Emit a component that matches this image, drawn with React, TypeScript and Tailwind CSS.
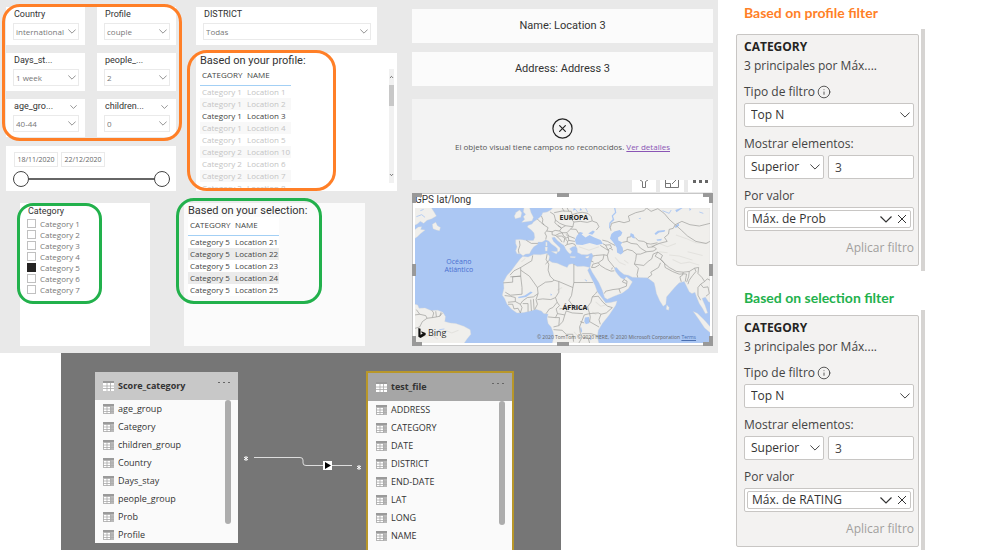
import { useState } from "react"
import type { ReactNode } from "react"
import clsx from "clsx"
import { ChevronDown, ChevronUp, CircleX, Info } from "lucide-react"

const slicers = [
    { title: "Country", value: "international", menu: false },
    { title: "Profile", value: "couple", menu: false },
    { title: "Days_st...", value: "1 week", menu: false },
    { title: "people_...", value: "2", menu: false },
    { title: "age_gro...", value: "40-44", menu: true },
    { title: "children...", value: "0", menu: true },
]

const profileRows = [
    ["Category 1", "Location 1"],
    ["Category 1", "Location 2"],
    ["Category 1", "Location 3"],
    ["Category 1", "Location 4"],
    ["Category 1", "Location 5"],
    ["Category 2", "Location 10"],
    ["Category 2", "Location 6"],
    ["Category 2", "Location 7"],
    ["Category 2", "Location 8"],
]

const selectionRows = [
    ["Category 5", "Location 21"],
    ["Category 5", "Location 22"],
    ["Category 5", "Location 23"],
    ["Category 5", "Location 24"],
    ["Category 5", "Location 25"],
]

const categories = ["Category 1", "Category 2", "Category 3", "Category 4", "Category 5", "Category 6", "Category 7"]

const scoreFields = ["age_group", "Category", "children_group", "Country", "Days_stay", "people_group", "Prob", "Profile"]
const fileFields = ["ADDRESS", "CATEGORY", "DATE", "DISTRICT", "END-DATE", "LAT", "LONG", "NAME"]

function Caret({ className }: { className: string }) {
    return (
        <svg viewBox="0 0 12 7" className={className} fill="none" stroke="currentColor" strokeWidth="1.2" aria-hidden>
            <path d="M.5 .5 L6 6 L11.500 .5" />
        </svg>
    )
}

function Slicer({ title, value, menu = false }: { title: string; value: string; menu?: boolean }) {
    return (
        <label className="block bg-white pl-[7px] pr-1.5 pb-[5px]">
            <span className="flex h-4 items-center justify-between pl-px pr-0.5 font-[Roboto] text-[9px] text-[#333]">
                {title}
                {menu ? <Caret className="h-1 w-[7px] text-[#666]" /> : null}
            </span>
            <span className="relative block">
                <select className="block h-[17px] w-full appearance-none border border-[#eaeaea] bg-white pl-0.5 text-[8px] text-[#777]">
                    <option>{value}</option>
                </select>
                <Caret className="pointer-events-none absolute right-[3px] top-1.5 h-[5px] w-2 text-[#777]" />
            </span>
        </label>
    )
}

function DataTable({ rows, faded, stripe }: { rows: string[][]; faded?: boolean; stripe: string }) {
    return (
        <table className="w-[91px] table-fixed border-collapse text-[8px] leading-3">
            <thead>
                <tr className="h-[18px] bg-white text-left align-top text-[#444]">
                    <th className="w-11 border-b border-[#a3d0f5] pl-0.5 pt-0.5 font-normal">CATEGORY</th>
                    <th className="border-b border-[#a3d0f5] pl-[3px] pt-0.5 font-normal">NAME</th>
                </tr>
            </thead>
            <tbody>
                {rows.map(([category, name], i) => (
                    <tr
                        key={name}
                        className={clsx(
                            "h-3 whitespace-nowrap",
                            i % 2 === 1 ? stripe : "bg-white",
                            faded && name !== "Location 3" ? "text-[#c4c4c4]" : "text-[#444]"
                        )}
                    >
                        <td className="pl-0.5">{category}</td>
                        <td className="pl-[3px]">{name}</td>
                    </tr>
                ))}
            </tbody>
        </table>
    )
}

function DateRange() {
    const [range, setRange] = useState([0, 34])
    const thumb =
        "pointer-events-none absolute inset-0 h-4 w-full appearance-none bg-transparent [&::-webkit-slider-thumb]:pointer-events-auto [&::-webkit-slider-thumb]:h-4 [&::-webkit-slider-thumb]:w-4 [&::-webkit-slider-thumb]:appearance-none [&::-webkit-slider-thumb]:rounded-full [&::-webkit-slider-thumb]:border [&::-webkit-slider-thumb]:border-[#444] [&::-webkit-slider-thumb]:bg-white"

    return (
        <div className="h-[45px] bg-white pl-[7px] pr-1.5 pt-1.5">
            <div className="flex gap-[3px] pl-px text-[7px] text-[#666]">
                <input aria-label="Start date" defaultValue="18/11/2020" className="h-[15px] w-11 border border-[#eaeaea] text-center" />
                <input aria-label="End date" defaultValue="22/12/2020" className="h-[15px] w-11 border border-[#eaeaea] text-center" />
            </div>
            <div className="relative mt-1 flex h-4 items-center">
                <div className="h-0.5 w-full bg-[#666]" />
                <input
                    type="range"
                    aria-label="Range start"
                    min={0}
                    max={34}
                    value={range[0]}
                    onChange={(e) => setRange([Number(e.target.value), range[1]])}
                    className={thumb}
                />
                <input
                    type="range"
                    aria-label="Range end"
                    min={0}
                    max={34}
                    value={range[1]}
                    onChange={(e) => setRange([range[0], Number(e.target.value)])}
                    className={thumb}
                />
            </div>
        </div>
    )
}

function WorldMap() {
    return (
        <svg viewBox="30 84 882 404" preserveAspectRatio="none" className="block h-[135px] w-full bg-[#abc7f3]" aria-hidden>
            <g fill="#f0efec" stroke="#d9d9d6" strokeWidth="1">
                {/* Eurasia */}
                <path d="M442 84 L436 90 L425 96 L412 98 L408 108 L396 118 L384 126 L380 132 L368 136 L366 141 L378 150 L386 159 L388 172 L384 181 L364 181 L345 178 L331 179 L331 190 L335 200 L331 212 L335 221 L345 221 L353 227 L361 222 L372 221 L378 210 L385 200 L396 193 L398 186 L410 186 L421 179 L430 183 L438 192 L449 199 L456 206 L456 217 L463 212 L464 204 L454 194 L444 184 L439 173 L447 171 L456 181 L468 191 L476 196 L480 206 L487 216 L494 222 L499 215 L492 206 L501 200 L511 198 L515 205 L516 217 L528 223 L545 224 L558 219 L563 227 L558 242 L553 262 L560 276 L570 292 L580 308 L590 330 L597 352 L605 357 L625 348 L650 338 L668 325 L680 305 L672 298 L662 290 L655 298 L645 293 L638 285 L630 275 L625 262 L633 262 L641 272 L655 283 L668 285 L680 291 L700 292 L725 293 L735 300 L745 308 L748 320 L752 340 L762 362 L772 378 L780 372 L782 350 L795 335 L808 320 L820 308 L835 304 L842 318 L850 335 L858 340 L867 336 L872 350 L880 370 L890 385 L898 400 L905 398 L897 375 L888 355 L898 350 L908 365 L912 366 L912 84 Z" />
                {/* Africa */}
                <path d="M352 229 L345 236 L330 255 L318 272 L305 286 L295 305 L296 325 L291 345 L298 355 L305 371 L318 386 L335 398 L355 397 L375 392 L392 387 L408 392 L415 400 L428 401 L425 415 L428 430 L437 440 L443 455 L445 470 L440 490 L580 490 L575 470 L578 450 L590 430 L610 405 L630 375 L634 362 L615 367 L600 368 L590 355 L575 335 L568 315 L555 290 L546 270 L552 262 L535 258 L515 259 L500 251 L490 253 L485 262 L470 256 L455 249 L440 247 L430 240 L432 228 L425 220 L405 224 L385 223 L368 231 Z" />
                {/* British Isles */}
                <path d="M356 82 L372 82 L377 98 L384 112 L380 122 L362 125 L349 127 L358 118 L354 110 L361 103 L354 96 Z" />
                <path d="M333 97 L343 90 L349 98 L346 112 L330 116 L327 108 Z" />
                {/* North America */}
                <path d="M28 82 L78 82 L87 96 L94 108 L80 116 L66 121 L56 130 L46 124 L37 132 L28 136 Z" />
                <path d="M82 133 L92 127 L97 137 L106 142 L103 152 L94 150 L84 146 Z" />
                <path d="M28 150 L40 141 L50 140 L47 148 L60 150 L47 160 L37 170 L28 176 Z" />
                {/* South America */}
                <path d="M28 372 L38 374 L42 384 L60 383 L78 391 L98 390 L113 396 L121 409 L119 424 L135 428 L152 430 L176 438 L195 448 L197 462 L186 475 L176 490 L28 490 Z" />
                <path d="M783 374 L790 382 L788 390 L781 387 Z" />
                <path d="M862 394 L874 399 L895 419 L914 441 L914 458 L896 443 L877 415 Z" />
                <path d="M438 214 L456 214 L453 222 Z" />
                <path d="M421 186 L425 186 L425 198 L421 198 Z" />
                <path d="M419 201 L426 201 L425 213 L420 213 Z" />
                <path d="M494 229 L510 230 L508 233 L495 232 Z" />
                <path d="M540 230 L551 227 L548 234 L541 234 Z" />
            </g>
            {/* relief */}
            <g fill="none" stroke="#e3e2de" strokeWidth="3">
                <path d="M735 197 L760 190 L785 200 L810 190 M800 238 L825 250 L850 246 L880 255 M790 225 L820 228 L860 240 M810 165 L840 175 L870 188 L905 190 M655 240 L668 250 M628 232 L642 247 L660 255 M760 215 L785 218 M845 215 L890 226 M570 365 L585 378 L600 374 M520 200 L550 210 L580 200 M348 245 L360 235" />
                <path d="M50 470 L80 464 L98 476 M120 450 L140 458 L160 450 M455 330 L470 322 M560 395 L572 404 M505 455 L520 470" />
            </g>
            {/* inland seas and lakes */}
            <g fill="#abc7f3">
                <path d="M512 193 L508 180 L514 167 L524 156 L533 159 L528 163 L540 172 L552 165 L566 172 L585 180 L592 191 L574 195 L552 189 L530 195 Z" />
                <path d="M548 160 L562 151 L568 155 L560 164 Z" />
                <path d="M626 154 L642 150 L650 157 L646 166 L637 172 L638 181 L650 187 L645 194 L651 203 L653 217 L645 223 L634 217 L633 203 L622 186 L613 175 L617 162 Z" />
                <path d="M675 159 L684 163 L688 175 L681 174 L673 167 Z" />
                <path d="M746 160 L756 152 L778 150 L776 155 L760 157 L750 165 Z" />
                <path d="M752 178 L768 176 L766 181 L754 182 Z M806 140 L818 130 L820 136 L810 144 Z M808 90 L825 84 L830 84 L812 97 Z M538 412 L550 410 L552 428 L541 432 L536 424 Z M435 340 L440 343 L436 347 Z M526 438 L530 452 L527 458 L524 446 Z M553 462 L558 478 L554 480 Z M505 84 L512 88 L502 92 Z M524 84 L530 90 L522 92 Z" />
                <path d="M629 84 L632 98 L622 108 L626 120 L615 130 L612 145 L610 145 L611 128 L621 118 L618 107 L628 97 L625 84 Z" />
                <path d="M338 350 L358 346 L376 334 L382 337 L362 350 L340 354 Z M536 296 L545 302 L542 304 Z M850 84 L856 88 L851 93 Z M698 115 L705 113 L704 118 Z" />
            </g>
            {/* country borders */}
            <g fill="none" stroke="#9b9b98" strokeWidth="2" strokeLinejoin="round">
                <path d="M363 181 L378 190 L397 190 M342 182 L344 195 L339 210 L341 220 M396 117 L405 126 L416 135 L428 143 L424 153 L418 158 L423 168 L421 178 M408 108 L412 118 L411 128 M416 135 L411 128 M424 153 L440 155 L449 151 L462 153 L468 144 L457 136 L448 128 L450 120 L446 104 L434 96 M450 120 L463 130 L480 137 L502 140 M446 98 L470 93 L497 94 L500 104 L497 117 L505 126 L502 140" />
                <path d="M470 84 L476 94 M485 84 L490 94 M500 104 L516 99 L530 97 L547 100 L557 110 L560 123 L574 128 L580 140 L572 150 M505 126 L524 124 L545 127 L559 123 M457 136 L468 144 L480 137 M462 153 L470 158 L484 158 L495 147 L502 140 M440 155 L440 164 L450 166 L462 160 L470 158 M450 166 L462 176 L470 186 M455 168 L468 168 L478 174 L475 187 M470 158 L474 168 L484 174 L488 170 L482 163 M484 158 L490 168 L508 175 M495 147 L512 148 L519 160 L522 158 M488 170 L490 181 L508 184 M478 174 L486 184 L485 193 L479 197 M485 193 L500 190 L508 193 L510 198 M486 184 L490 181" />
                <path d="M590 180 L606 184 L616 190 L628 196 M592 191 L600 195 L607 210 L613 204 L622 210 M600 195 L614 194 L618 204 M584 196 L600 206 L610 212 L605 226 L595 224 L570 226 L562 228 M595 224 L592 238 L578 248 L562 252 M578 248 L584 256 L600 266 L616 273 L626 272 M605 226 L608 240 L618 252 L626 262 M562 252 L558 262 L568 262 L580 255 M556 242 L564 246 M620 262 L618 268 M655 298 L664 303 L662 318 L640 326 L622 328 L600 333 L596 340 M640 326 L644 338 M655 298 L650 305 L662 310" />
                <path d="M652 214 L665 208 L680 212 L692 222 L690 238 L686 252 L698 264 L694 283 L696 292 M692 222 L704 222 L722 215 L742 213 M686 252 L714 256 L727 244 L738 236 L742 222 L756 216 M742 213 L752 207 L745 200 L726 202 L722 190 L735 192 L755 188 M650 187 L664 184 L676 190 L694 192 L704 204 L722 215 M664 184 L665 172 L676 170 M688 172 L698 182 L714 184 L724 190 M616 152 L614 142 L618 130 L640 124 L655 128 L672 123 L668 108 L690 98 L715 92 L722 84" />
                <path d="M722 84 L736 94 L756 86 L775 100 L790 118 L808 134 M808 134 L802 145 L790 148 L788 162 L776 172 L784 184 L760 190 L738 200 M808 134 L826 150 L845 168 L870 184 L900 190 L912 184 M808 134 L828 124 L852 134 L880 138 L912 130 M756 216 L770 226 L764 238 L776 250 L790 262 L812 274 L832 276 L850 274 L866 264 L878 262 M756 216 L748 228 L768 240 L776 250 M726 293 L738 284 L735 276 L758 262 L764 248 M776 250 L778 262 L800 274 L820 282 L834 281 M832 276 L830 285 L822 290 L826 305 M834 281 L842 282 L840 292 L838 304 M850 274 L848 290 L842 306 M866 264 L870 274 L860 286 L850 300 L846 312 M878 262 L876 280 L888 292 L896 304 L884 312 L876 322 L876 345 L884 360 M896 304 L904 296 L912 300 M884 312 L892 322 L906 320 L910 340 L900 348" />
                <path d="M382 226 L379 242 L362 252 L346 262 L326 272 L314 285 M346 262 L346 288 L315 290 M346 270 L372 288 L396 322 L420 306 L440 304 L446 300 M346 288 L350 322 L350 342 L315 345 L300 336 M346 288 L322 290 L322 306 L294 308 M425 222 L422 238 L430 252 L428 270 L434 288 L446 300 L460 304 L502 322 M505 252 L505 307 L502 322 M505 307 L562 307 M432 240 L420 252 M396 322 L398 340 L384 350 L366 352 L352 362 L345 372 M398 340 L392 358 L396 372 L388 388 M396 358 L412 356 L436 358 L450 352 L460 336 L460 304 M450 352 L455 366 L442 382 L432 386 L422 400 M455 366 L462 376 L452 386 L456 400 L450 412 L428 410" />
                <path d="M502 322 L498 346 L490 360 L500 374 L476 384 L462 386 M500 374 L514 384 L532 384 L546 380 L552 400 M546 380 L556 366 L560 350 L570 340 L574 334 M560 350 L578 348 L592 366 L606 378 L620 382 L602 398 L586 402 L578 398 L552 400 M586 402 L580 418 L584 432 M552 400 L554 410 L552 424 L580 440 M552 400 L536 404 L530 420 L522 440 L524 456 L530 470 L520 488 M456 400 L478 404 L482 392 L500 398 L532 400 M478 404 L472 424 L460 436 L444 440 M450 412 L462 412 L460 436 M444 448 L470 450 L482 462 L502 462 L504 484 M530 470 L548 474 L552 488 M524 424 L536 428 M530 460 L556 460 L576 466" />
                <path d="M298 346 L315 348 L330 352 L330 364 L308 366 M308 372 L322 372 L326 386 M326 386 L338 384 L345 398 M345 372 L350 382 L345 398 M352 370 L368 370 L368 394 M376 358 L378 392 M384 356 L386 388 M330 364 L345 372" />
                <path d="M34 388 L44 402 L62 406 L66 414 L52 424 L44 440 L30 444 M66 414 L82 412 L86 398 L80 390 M82 412 L94 410 L104 408 L112 398 M94 410 L92 393 M104 408 L108 396 M30 404 L44 402" />
            </g>
            <g fill="none" stroke="#abc7f3" strokeWidth="2.5">
                <path d="M34 110 L50 104 L60 112 M46 92 L56 88 M50 144 L68 140 M88 460 L104 448 L118 446 M510 88 L516 96 M770 92 L790 100 L796 90 M880 96 L892 100 M540 84 L546 96" />
            </g>
        </svg>
    )
}

function Handles() {
    return (
        <div className="pointer-events-none absolute -inset-px" aria-hidden>
            <span className="absolute left-0 top-0 h-2.5 w-2.5 border-l-4 border-t-4 border-[#999]" />
            <span className="absolute right-0 top-0 h-2.5 w-2.5 border-r-4 border-t-4 border-[#999]" />
            <span className="absolute bottom-0 left-0 h-2.5 w-2.5 border-b-4 border-l-4 border-[#999]" />
            <span className="absolute bottom-0 right-0 h-2.5 w-2.5 border-b-4 border-r-4 border-[#999]" />
            <span className="absolute inset-x-0 top-0 mx-auto h-1 w-3 bg-[#999]" />
            <span className="absolute inset-x-0 bottom-0 mx-auto h-1 w-3 bg-[#999]" />
            <span className="absolute inset-y-0 left-0 my-auto h-3 w-1 bg-[#999]" />
            <span className="absolute inset-y-0 right-0 my-auto h-3 w-1 bg-[#999]" />
        </div>
    )
}

function MapVisual() {
    return (
        <section className="relative mt-px border border-[#c8c8c8] bg-white px-0.5 pb-0.5">
            <h2 className="h-3.5 font-[Roboto] text-[10px] leading-3 text-[#333]">GPS lat/long</h2>
            <div className="relative">
                <WorldMap />
                <span className="absolute left-[49%] top-1 text-[7px] font-bold leading-3 text-[#222]">EUROPA</span>
                <span className="absolute left-1/2 top-[94px] text-[7px] font-bold leading-3 text-[#222]">ÁFRICA</span>
                <span className="absolute left-[10%] top-[50px] text-center text-[7px] leading-2 text-[#4a6fd0]">
                    Océano
                    <br />
                    Atlántico
                </span>
                <span className="absolute bottom-1 left-[3px] flex items-center gap-0.5 text-[9px] leading-3 text-[#333]">
                    <svg viewBox="0 0 8 11" className="h-2.5 w-2" fill="#111" aria-hidden>
                        <path d="M0 0 L2.4 .8 V7.4 L5 6 L3.8 5.4 L3 3.6 L8 5.4 V7.8 L2.4 11 L0 9.6 Z" />
                    </svg>
                    Bing
                </span>
                <span className="absolute bottom-0.5 right-3.5 text-[5px] leading-2 text-[#666]">
                    © 2020 TomTom © 2020 HERE, © 2020 Microsoft Corporation{" "}
                    <a href="#terms" className="text-[#4a6fb0] underline">
                        Terms
                    </a>
                </span>
            </div>
            <Handles />
        </section>
    )
}

function Report() {
    return (
        <div className="grid grid-cols-[391fr_301fr] gap-[15px] bg-[#e9e9e9] pb-[7px] pl-1.5 pr-[5px]">
            <div className="pt-[7px]">
                <div className="flex gap-5">
                    <div className="w-[170px]">
                        <div className="relative mb-[9px] grid grid-cols-2 gap-x-3 gap-y-2">
                            {slicers.map((s) => (
                                <Slicer key={s.title} {...s} />
                            ))}
                            <div className="pointer-events-none absolute -bottom-1 -left-1 -right-1.5 -top-[3px] rounded-[18px] border-3 border-[#ff7f27]" />
                        </div>
                        <DateRange />
                    </div>

                    <div className="flex flex-1 flex-col gap-2">
                        <div className="mr-5">
                            <Slicer title="DISTRICT" value="Todas" />
                        </div>
                        <section className="relative h-[138px] bg-white pl-1 pr-[3px]">
                            <h2 className="h-3.5 font-[Roboto] text-[11px] leading-4 text-[#333]">Based on your profile:</h2>
                            <div className="flex h-[121px] justify-between overflow-hidden">
                                <DataTable rows={profileRows} faded stripe="bg-[#f8f8f8]" />
                                <div className="mt-0.5 flex h-[114px] w-[5px] flex-col items-center bg-[#f1f1f1]">
                                    <ChevronUp className="mt-1 h-2 w-[5px] text-[#555]" strokeWidth={4} />
                                    <span className="mt-1 h-[21px] w-full bg-[#c8c8c8]" />
                                    <ChevronDown className="mb-1 mt-auto h-2 w-[5px] text-[#555]" strokeWidth={4} />
                                </div>
                            </div>
                            <div className="pointer-events-none absolute -left-[9px] -top-[3px] bottom-0 w-[149px] rounded-[20px] border-3 border-[#ff7f27]" />
                        </section>
                    </div>
                </div>

                <div className="mt-3 flex gap-[34px] pl-3.5">
                    <fieldset className="relative h-[143px] w-[130px] bg-white px-[7px]">
                        <div className="h-[15px] pl-px font-[Roboto] text-[9px] leading-4 text-[#333]">Category</div>
                        {categories.map((c) => (
                            <label key={c} className="flex h-[11px] items-center gap-1 text-[8px] leading-[11px] text-[#777]">
                                <input
                                    type="checkbox"
                                    defaultChecked={c === "Category 5"}
                                    className="h-[9px] w-[9px] appearance-none border border-[#c0c0c0] bg-white checked:border-[#252423] checked:bg-[#252423]"
                                />
                                {c}
                            </label>
                        ))}
                        <div className="pointer-events-none absolute -left-[3px] top-0 h-[101px] w-[85px] rounded-[16px] border-3 border-[#22b14c]" />
                    </fieldset>

                    <section className="relative mr-8 h-[143px] flex-1 bg-[#fbfbfb] pl-1">
                        <h2 className="h-3.5 font-[Roboto] text-[11px] leading-4 text-[#333]">Based on your selection:</h2>
                        <DataTable rows={selectionRows} stripe="bg-[#ebebeb]" />
                        <div className="pointer-events-none absolute -left-2 -top-[5px] h-[106px] w-[146px] rounded-[18px] border-3 border-[#22b14c]" />
                    </section>
                </div>
            </div>

            <div className="pt-[9px] text-[#333]">
                <div className="flex h-[34px] items-center justify-center bg-[#fbfbfb] font-[Roboto] text-[11px]">Name: Location 3</div>
                <div className="mt-[9px] flex h-[34px] items-center justify-center bg-[#fbfbfb] font-[Roboto] text-[11px]">
                    Address: Address 3
                </div>
                <div className="mt-[13px] flex h-[81px] flex-col items-center bg-[#f3f3f3] pt-[18px]">
                    <CircleX className="h-[23px] w-[23px] text-[#222]" strokeWidth={1.25} />
                    <p className="text-[8px] leading-3.5 text-[#555]">
                        El objeto visual tiene campos no reconocidos.{" "}
                        <a href="#details" className="text-[#8a55b5] underline">
                            Ver detalles
                        </a>
                    </p>
                </div>
                <div className="flex justify-end gap-1 pr-px">
                    <button type="button" aria-label="Filters" className="flex h-3 w-6 justify-center overflow-hidden bg-white">
                        <svg viewBox="0 0 12 12" className="h-3 w-3" fill="none" stroke="#777">
                            <path d="M2 0 L4.500 1.500 V7.500 H7.500 V1.500 L10 0" />
                        </svg>
                    </button>
                    <button type="button" aria-label="Focus mode" className="flex h-3 w-6 justify-center overflow-hidden bg-white">
                        <svg viewBox="0 0 16 12" className="h-3 w-4" fill="none" stroke="#777">
                            <path d="M1.500 0 V7.500 H14.500 V0 M1.500 3.500 H6.500 V7.500 M8 4 L12 0" />
                        </svg>
                    </button>
                    <button type="button" aria-label="More options" className="flex h-3 w-6 justify-center gap-[3px] bg-white">
                        <span className="h-[3px] w-[3px] bg-[#666]" />
                        <span className="h-[3px] w-[3px] bg-[#666]" />
                        <span className="h-[3px] w-[3px] bg-[#666]" />
                    </button>
                </div>
                <MapVisual />
            </div>
        </div>
    )
}

function FieldIcon({ header = false }: { header?: boolean }) {
    return (
        <svg viewBox="0 0 11 10" className="h-2.5 w-[11px] shrink-0" aria-hidden>
            <path d="M0 0 H11 V10 H0 Z" fill={header ? "#fff" : "#b8b8b8"} />
            {header ? null : <path d="M1 3 H7 V9 H1 Z" fill="#fff" />}
            <path d="M0 0 H11 V2 H0 Z" fill="#9a9a9a" />
            <path d="M0 5 H11 M0 7.500 H11 M4 2 V10 M7.500 2 V10" stroke="#aaa" strokeWidth=".8" />
        </svg>
    )
}

function ModelTable({ name, fields, selected = false }: { name: string; fields: string[]; selected?: boolean }) {
    return (
        <div className="flex h-full flex-col bg-[#fafafa] text-[9px] text-[#333]">
            <div className={clsx("flex h-7 shrink-0 items-center gap-1 px-2", selected ? "bg-[#a6a6a6]" : "bg-[#c8c8c8]")}>
                <FieldIcon header />
                <span className="flex-1 font-bold">{name}</span>
                <button type="button" aria-label="More options" className="mb-2 flex gap-[3px]">
                    <span className="h-px w-0.5 bg-[#666]" />
                    <span className="h-px w-0.5 bg-[#666]" />
                    <span className="h-px w-0.5 bg-[#666]" />
                </button>
            </div>
            <div className="flex justify-between pl-2 pr-[7px]">
                <ul>
                    {fields.map((f) => (
                        <li key={f} className="flex h-[18px] items-center gap-1">
                            <FieldIcon />
                            {f}
                        </li>
                    ))}
                </ul>
                <span className="h-[124px] w-1.5 rounded-full bg-[#adadad]" />
            </div>
        </div>
    )
}

function Model() {
    return (
        <div className="relative ml-[61px] mr-[157px] min-h-[190px] flex-1 overflow-hidden bg-[#767676]">
            <div className="absolute left-[34px] top-[19px] h-[171px] w-[143px] overflow-hidden">
                <ModelTable name="Score_category" fields={scoreFields} />
            </div>
            <svg viewBox="0 0 122 24" className="absolute left-[182px] top-[94px] h-6 w-[122px]" fill="none" aria-hidden>
                <path d="M11 10.500 H57 Q60 10.500 60 13 V16 Q60 18.500 63 18.500 H109" stroke="#ddd" />
                <path d="M80 14 H89 V23 H80 Z" fill="#fff" />
                <path d="M82 15 L88 18.500 L82 22 Z" fill="#000" />
                <path d="M3 9 V14 M1 10 L5 13 M5 10 L1 13 M116 18 V23 M114 19 L118 22 M118 19 L114 22" stroke="#fff" />
            </svg>
            <div className="absolute -bottom-2 left-[305px] top-[18px] w-[148px] overflow-hidden border-2 border-[#b8972a]">
                <ModelTable name="test_file" fields={fileFields} selected />
            </div>
        </div>
    )
}

function Field({ label, children }: { label: ReactNode; children: ReactNode }) {
    return (
        <label className="mt-2 block min-w-0">
            <span className="mb-0.5 flex h-[18px] items-center gap-0.5 whitespace-nowrap">{label}</span>
            {children}
        </label>
    )
}

function Dropdown({ value, label }: { value: string; label?: string }) {
    return (
        <span className="relative block">
            <select
                aria-label={label}
                className="block h-6 w-full appearance-none rounded-xs border border-[#c8c6c4] bg-white pl-1.5 text-[#333]"
            >
                <option>{value}</option>
            </select>
            <Caret className="pointer-events-none absolute right-1 top-[9px] h-1.5 w-2.5 text-[#444]" />
        </span>
    )
}

function FilterPanel({ measure }: { measure: string }) {
    return (
        <div className="border-r-4 border-[#d6d4d2] pb-[5px] pr-0.5 pt-[5px]">
            <form
                className="rounded-xs border border-[#c8c6c4] bg-[#f3f2f1] pb-2 pl-[7px] pr-1 pt-[3px] text-[12px] leading-[18px] text-[#444]"
                onSubmit={(e) => e.preventDefault()}
            >
                <h3 className="font-bold text-[#252423]">CATEGORY</h3>
                <p className="mt-px">3 principales por Máx....</p>
                <Field
                    label={
                        <>
                            Tipo de filtro <Info className="h-3.5 w-3.5" strokeWidth={1.5} />
                        </>
                    }
                >
                    <Dropdown value="Top N" />
                </Field>
                <Field label="Mostrar elementos:">
                    <span className="grid grid-cols-[80fr_86fr] gap-1">
                        <Dropdown value="Superior" />
                        <input aria-label="Elementos" defaultValue="3" className="h-6 w-full min-w-0 rounded-xs border border-[#c8c6c4] bg-white px-1.5" />
                    </span>
                </Field>
                <div className="mt-2">
                    <div className="mb-0.5">Por valor</div>
                    <div className="flex h-6 rounded-xs border border-[#c8c6c4] bg-white p-0.5">
                        <div className="flex flex-1 items-center gap-1.5 rounded-xs border border-[#c8c6c4] px-1 text-[#333]">
                            <span className="flex-1">{measure}</span>
                            <button type="button" aria-label="Opciones del campo">
                                <Caret className="h-[7px] w-3" />
                            </button>
                            <button type="button" aria-label="Quitar campo">
                                <svg viewBox="0 0 8 8" className="h-2 w-2" stroke="currentColor" aria-hidden>
                                    <path d="M0 0 L8 8 M8 0 L0 8" />
                                </svg>
                            </button>
                        </div>
                    </div>
                </div>
                <button type="submit" className="mt-2 block w-full text-right text-[#a19f9d]">
                    Aplicar filtro
                </button>
            </form>
        </div>
    )
}

export default function App() {
    return (
        <main className="grid min-h-screen grid-cols-[minmax(0,1fr)_270px] bg-white font-['Open_Sans',sans-serif]">
            <div className="flex flex-col">
                <Report />
                <Model />
            </div>
            <aside className="h-screen overflow-hidden pl-[18px] pr-[63px] pt-1">
                <h2 className="mb-[7px] h-[18px] pl-2 font-[Lato] text-[14px] font-bold leading-[18px] text-[#ff7f27]">
                    Based on profile filter
                </h2>
                <FilterPanel measure="Máx. de Prob" />
                <h2 className="mb-[3px] mt-[18px] h-[18px] pl-2 font-[Lato] text-[14px] font-bold leading-[18px] text-[#22b14c]">
                    Based on selection filter
                </h2>
                <FilterPanel measure="Máx. de RATING" />
            </aside>
        </main>
    )
}
